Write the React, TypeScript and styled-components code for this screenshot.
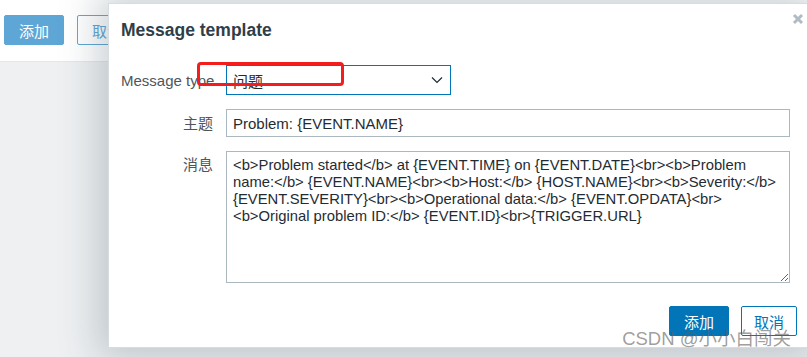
import React, { useState } from "react";
import styled, { createGlobalStyle } from "styled-components";

const GlobalStyle = createGlobalStyle`
    html, body {
        margin: 0;
        padding: 0;
        background: #eef0f2;
        font-family: "Liberation Sans", Arial, "Noto Sans CJK SC", sans-serif;
    }
`;

const defaultMessage =
    "<b>Problem started</b> at {EVENT.TIME} on {EVENT.DATE}<br><b>Problem name:</b> {EVENT.NAME}<br><b>Host:</b> {HOST.NAME}<br><b>Severity:</b> {EVENT.SEVERITY}<br><b>Operational data:</b> {EVENT.OPDATA}<br><b>Original problem ID:</b> {EVENT.ID}<br>{TRIGGER.URL}";

const App: React.FC = () => {
    const [type, setType] = useState("问题");
    const [subject, setSubject] = useState("Problem: {EVENT.NAME}");
    const [message, setMessage] = useState(defaultMessage);

    return (
        <Page>
            <GlobalStyle />
            <TopBar>
                <PageButton primary>添加</PageButton>
                <PageButton>取消</PageButton>
            </TopBar>

            <Modal>
                <Header>
                    <Title>Message template</Title>
                    <CloseButton aria-label="close">
                        <svg width="12" height="12" viewBox="0 0 12 12">
                            <path d="M2 2 L10 10 M10 2 L2 10" stroke="#b1bbc1" strokeWidth="3" />
                        </svg>
                    </CloseButton>
                </Header>

                <Form>
                    <Label>Message type</Label>
                    <SelectBox>
                        <SelectValue>{type}</SelectValue>
                        <svg width="12" height="8" viewBox="0 0 12 8">
                            <path d="M1 1.5 L6 6.5 L11 1.5" fill="none" stroke="#1f2c33" strokeWidth="1.2" />
                        </svg>
                        <Hidden value={type} onChange={(e) => setType(e.target.value)}>
                            <option>问题</option>
                            <option>问题恢复</option>
                        </Hidden>
                    </SelectBox>

                    <Label>主题</Label>
                    <TextInput value={subject} onChange={(e) => setSubject(e.target.value)} />

                    <Label top>消息</Label>
                    <TextArea value={message} onChange={(e) => setMessage(e.target.value)} />
                </Form>

                <Footer>
                    <DialogButton primary>添加</DialogButton>
                    <DialogButton>取消</DialogButton>
                </Footer>

                {/* red marker someone drew on the screenshot */}
                <Marker />
            </Modal>

            <Watermark>CSDN @小小白闯关</Watermark>
        </Page>
    );
};

export default App;

const Page = styled.div`
    position: relative;
    width: 807px;
    height: 357px;
    overflow: hidden;
    background: #eef0f2;
`;

const TopBar = styled.div`
    display: flex;
    gap: 13px;
    height: 62px;
    box-sizing: border-box;
    padding: 15px 4px 0;
    background: #fff;
    border-bottom: 1px solid #e3e7ea;
`;

const PageButton = styled.button<{ primary?: boolean }>`
    height: 30px;
    width: 60px;
    border-radius: 2px;
    font-family: "Liberation Sans", "Noto Sans CJK SC", sans-serif;
    font-size: 15px;
    border: 1px solid #5ea6d6;
    background: ${(p) => (p.primary ? "#5ea6d6" : "#fff")};
    color: ${(p) => (p.primary ? "#fff" : "#5ea6d6")};
`;

const Modal = styled.div`
    position: absolute;
    left: 108px;
    top: 3px;
    width: 700px;
    height: 345px;
    box-sizing: border-box;
    background: #fff;
    border: 1px solid #d6dde1;
    padding: 15px 10px 12px 12px;
    display: flex;
    flex-direction: column;
    box-shadow: 0 0 36px 10px rgba(70, 90, 100, 0.28);
`;

const Header = styled.div`
    display: flex;
    justify-content: space-between;
    align-items: flex-start;
`;

const Title = styled.h2`
    margin: 0;
    font-size: 17.5px;
    line-height: 22px;
    font-weight: bold;
    color: #2f3e48;
`;

const CloseButton = styled.button`
    border: none;
    background: none;
    padding: 0;
    margin-top: -6px;
    margin-right: -7px;
    line-height: 0;
    cursor: pointer;
`;

const Form = styled.div`
    display: grid;
    grid-template-columns: 92px 564px;
    grid-template-rows: 30px 28px 132px;
    column-gap: 13px;
    row-gap: 14px;
    margin-top: 24px;
`;

const Label = styled.label<{ top?: boolean }>`
    text-align: right;
    font-size: 15px;
    color: #4e565c;
    align-self: ${(p) => (p.top ? "start" : "center")};
    padding-top: ${(p) => (p.top ? "5px" : "0")};
    line-height: 17px;
    white-space: nowrap;
`;

const SelectBox = styled.div`
    position: relative;
    width: 225px;
    box-sizing: border-box;
    border: 1px solid #0275b8;
    display: flex;
    align-items: center;
    justify-content: space-between;
    padding: 0 7px 0 6px;
`;

const SelectValue = styled.span`
    font-size: 15px;
    color: #1f2c33;
`;

const Hidden = styled.select`
    position: absolute;
    inset: 0;
    opacity: 0;
`;

const TextInput = styled.input`
    box-sizing: border-box;
    width: 564px;
    height: 28px;
    border: 1px solid #acb8bf;
    padding: 0 6px;
    font-family: "Liberation Sans", Arial, sans-serif;
    font-size: 15px;
    color: #1f2c33;
    outline: none;
`;

const TextArea = styled.textarea`
    box-sizing: border-box;
    width: 564px;
    height: 132px;
    margin: 0;
    border: 1px solid #acb8bf;
    padding: 5px 3px 5px 6px;
    font-family: "Liberation Sans", Arial, sans-serif;
    font-size: 14.8px;
    line-height: 17px;
    color: #1f2c33;
    outline: none;
`;

const Footer = styled.div`
    display: flex;
    justify-content: flex-end;
    gap: 12px;
    margin-top: 23px;
`;

const DialogButton = styled.button<{ primary?: boolean }>`
    height: 30px;
    width: ${(p) => (p.primary ? "60px" : "56px")};
    border-radius: 2px;
    font-family: "Liberation Sans", "Noto Sans CJK SC", sans-serif;
    font-size: 15px;
    border: 1px solid #0275b8;
    background: ${(p) => (p.primary ? "#0275b8" : "#fff")};
    color: ${(p) => (p.primary ? "#fff" : "#0275b8")};
    cursor: pointer;
`;

const Marker = styled.div`
    position: absolute;
    left: 88px;
    top: 58px;
    width: 147px;
    height: 24px;
    box-sizing: border-box;
    border: 3px solid #f41d1d;
    border-radius: 4px;
    pointer-events: none;
`;

const Watermark = styled.div`
    position: absolute;
    right: 16px;
    bottom: 7px;
    font-family: "Liberation Sans", "Noto Sans CJK SC", sans-serif;
    font-size: 18.5px;
    color: rgba(95, 95, 95, 0.62);
    pointer-events: none;
`;
